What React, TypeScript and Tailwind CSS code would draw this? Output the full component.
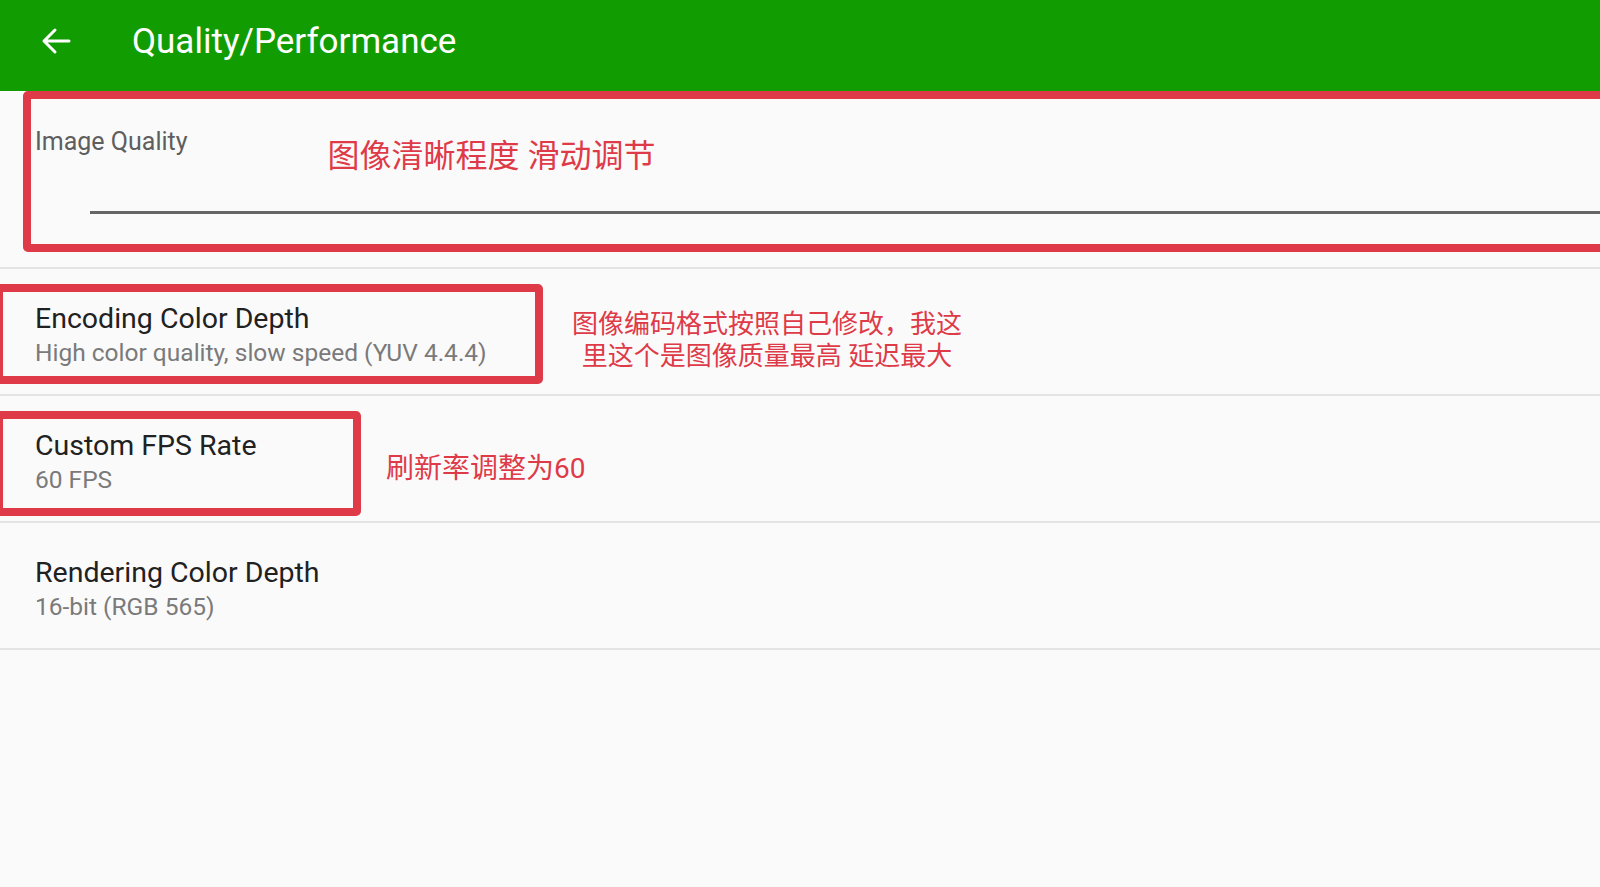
import React from "react";

const FONT = { fontFamily: 'Roboto, "Noto Sans CJK SC", sans-serif' };

type Row = {
  title: string;
  summary: string;
  boxWidth?: string;
  boxHeight?: string;
  note?: React.ReactNode;
  noteClass?: string;
};

const rows: Row[] = [
  {
    title: "Encoding Color Depth",
    summary: "High color quality, slow speed (YUV 4.4.4)",
    boxWidth: "w-[548px]",
    boxHeight: "h-[100px]",
    note: (
      <>
        图像编码格式按照自己修改，我这
        <br />
        里这个是图像质量最高 延迟最大
      </>
    ),
    noteClass: "ml-[537px] pt-[39px] text-[26px] leading-[32px] text-center",
  },
  {
    title: "Custom FPS Rate",
    summary: "60 FPS",
    boxWidth: "w-[366px]",
    boxHeight: "h-[105px]",
    note: "刷新率调整为60",
    noteClass: "ml-[351px] pt-[56px] text-[28px] leading-[34px]",
  },
  {
    title: "Rendering Color Depth",
    summary: "16-bit (RGB 565)",
  },
];

function BackArrow() {
  return (
    <svg width="30" height="28" viewBox="0 0 30 28" fill="none">
      <path
        d="M28 14H3M14 3L3 14l11 11"
        stroke="white"
        strokeWidth="3"
        strokeLinecap="round"
        strokeLinejoin="round"
      />
    </svg>
  );
}

export default function App() {
  return (
    <div className="w-[1600px] h-[887px] overflow-hidden bg-[#fafafa]" style={FONT}>
      {/* Toolbar */}
      <header className="h-[91px] bg-[#119c02] flex items-start">
        <div className="ml-[41px] mt-[27px] flex items-center">
          <BackArrow />
        </div>
        <h1 className="ml-[61px] mt-[24px] text-[35px] leading-[36px] text-white">Quality/Performance</h1>
      </header>

      {/* Image quality slider */}
      <section className="relative h-[178px] border-b-2 border-[#e4e4e4]">
        <div className="absolute top-0 left-[23px] -right-[20px] h-[161px] border-[8px] border-[#de3a48] rounded-[5px]" />
        <div className="flex items-start">
          <span className="ml-[35px] mt-[36px] text-[25px] leading-[30px] text-[#5e5e5e]">Image Quality</span>
          <span className="ml-[140px] mt-[46px] text-[32px] leading-[38px] text-[#de3a48]">
            图像清晰程度 滑动调节
          </span>
        </div>
        <div className="ml-[90px] mt-[36px] h-[3px] bg-[#666666]" />
      </section>

      {rows.map((r) => (
        <section key={r.title} className="relative h-[127px] border-b-2 border-[#e4e4e4] flex items-start">
          {r.boxWidth && (
            <div
              className={`absolute top-[15px] -left-[5px] ${r.boxWidth} ${r.boxHeight} border-[8px] border-[#de3a48] rounded-[5px]`}
            />
          )}
          <div className="pl-[35px] pt-[33px] w-0 whitespace-nowrap">
            <div className="text-[28.5px] leading-[34px] text-[#212121]">{r.title}</div>
            <div className="text-[24.5px] leading-[34px] text-[#7a7a7a]">{r.summary}</div>
          </div>
          {r.note && <div className={`whitespace-nowrap text-[#de3a48] ${r.noteClass}`}>{r.note}</div>}
        </section>
      ))}
    </div>
  );
}
